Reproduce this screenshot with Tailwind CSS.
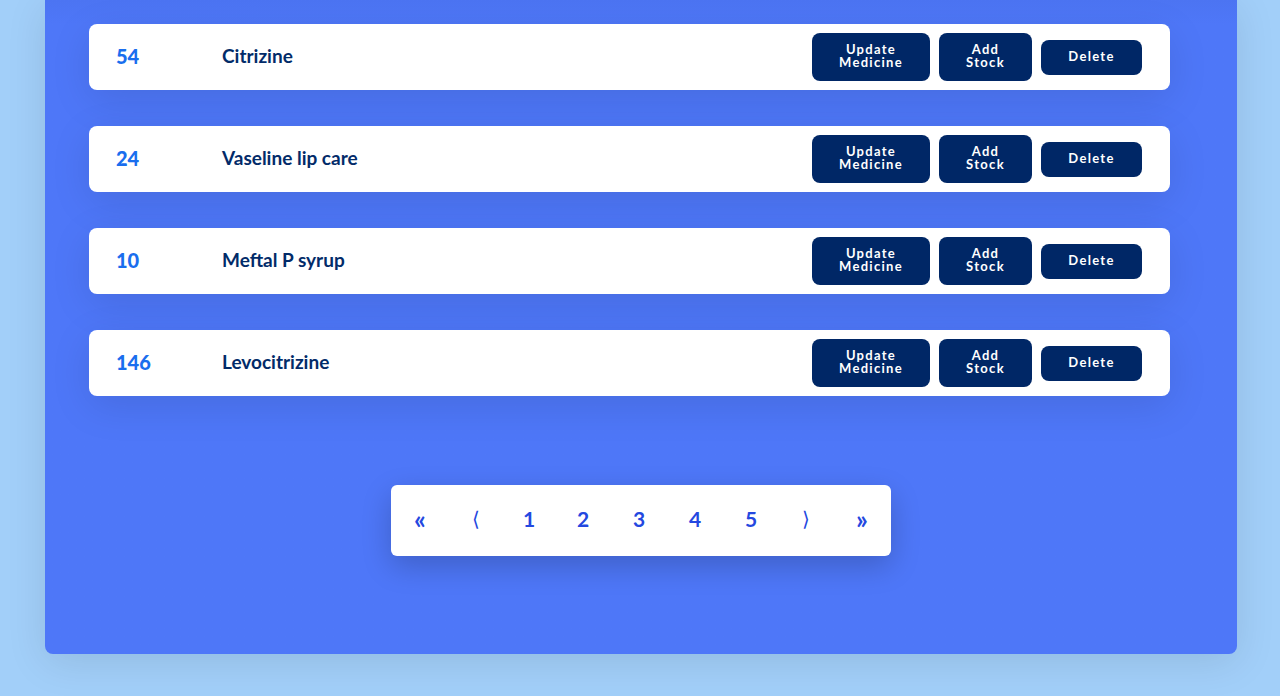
<!DOCTYPE html>
<html lang="en">
<head>
<meta charset="utf-8">
<meta name="viewport" content="width=device-width, initial-scale=1">
<title>Medicines</title>
<script src="https://cdn.jsdelivr.net/npm/@tailwindcss/browser@4"></script>
</head>
<body class="min-h-screen bg-[#a2cff9] pb-[42px] font-[Lato,sans-serif] font-bold">
<main class="ml-[45px] mr-[43px] rounded-b-lg bg-[#4e77f8] bg-linear-to-b from-[#4c74f2] to-[#4e77f8] to-[24px] pt-6 pb-[98px] pl-11 pr-[67px] shadow-[0_8px_40px_rgba(0,0,0,0.1)]">
  <ul class="flex flex-col gap-9">
    <li class="flex h-[66px] items-center rounded-lg bg-white pl-[27px] pr-7 shadow-[0_10px_40px_rgba(0,0,0,0.1)]">
      <span class="w-[106px] pb-0.5 text-xl leading-6 font-black text-[#1a6eee]">54</span>
      <span class="flex-1 pb-0.5 text-[19px] leading-6 text-[#022b69]">Citrizine</span>
      <div class="flex items-center gap-[9px] text-[13px] leading-[13px] tracking-widest text-white">
        <button type="button" class="h-12 w-[118px] rounded-lg bg-[#002766] px-6 pb-0.5">Update Medicine</button>
        <button type="button" class="h-12 w-[93px] rounded-lg bg-[#002766] px-6 pb-0.5">Add Stock</button>
        <button type="button" class="h-[35px] w-[101px] rounded-lg bg-[#002766] pb-0.5">Delete</button>
      </div>
    </li>
    <li class="flex h-[66px] items-center rounded-lg bg-white pl-[27px] pr-7 shadow-[0_10px_40px_rgba(0,0,0,0.1)]">
      <span class="w-[106px] pb-0.5 text-xl leading-6 font-black text-[#1a6eee]">24</span>
      <span class="flex-1 pb-0.5 text-[19px] leading-6 text-[#022b69]">Vaseline lip care</span>
      <div class="flex items-center gap-[9px] text-[13px] leading-[13px] tracking-widest text-white">
        <button type="button" class="h-12 w-[118px] rounded-lg bg-[#002766] px-6 pb-0.5">Update Medicine</button>
        <button type="button" class="h-12 w-[93px] rounded-lg bg-[#002766] px-6 pb-0.5">Add Stock</button>
        <button type="button" class="h-[35px] w-[101px] rounded-lg bg-[#002766] pb-0.5">Delete</button>
      </div>
    </li>
    <li class="flex h-[66px] items-center rounded-lg bg-white pl-[27px] pr-7 shadow-[0_10px_40px_rgba(0,0,0,0.1)]">
      <span class="w-[106px] pb-0.5 text-xl leading-6 font-black text-[#1a6eee]">10</span>
      <span class="flex-1 pb-0.5 text-[19px] leading-6 text-[#022b69]">Meftal P syrup</span>
      <div class="flex items-center gap-[9px] text-[13px] leading-[13px] tracking-widest text-white">
        <button type="button" class="h-12 w-[118px] rounded-lg bg-[#002766] px-6 pb-0.5">Update Medicine</button>
        <button type="button" class="h-12 w-[93px] rounded-lg bg-[#002766] px-6 pb-0.5">Add Stock</button>
        <button type="button" class="h-[35px] w-[101px] rounded-lg bg-[#002766] pb-0.5">Delete</button>
      </div>
    </li>
    <li class="flex h-[66px] items-center rounded-lg bg-white pl-[27px] pr-7 shadow-[0_10px_40px_rgba(0,0,0,0.1)]">
      <span class="w-[106px] pb-0.5 text-xl leading-6 font-black text-[#1a6eee]">146</span>
      <span class="flex-1 pb-0.5 text-[19px] leading-6 text-[#022b69]">Levocitrizine</span>
      <div class="flex items-center gap-[9px] text-[13px] leading-[13px] tracking-widest text-white">
        <button type="button" class="h-12 w-[118px] rounded-lg bg-[#002766] px-6 pb-0.5">Update Medicine</button>
        <button type="button" class="h-12 w-[93px] rounded-lg bg-[#002766] px-6 pb-0.5">Add Stock</button>
        <button type="button" class="h-[35px] w-[101px] rounded-lg bg-[#002766] pb-0.5">Delete</button>
      </div>
    </li>
  </ul>
  <div class="-mr-[23px] mt-[89px] flex justify-center">
    <nav aria-label="Pagination" class="flex h-[71px] items-center gap-11 rounded-md bg-white px-[22px] pb-1 text-[21px] leading-6 text-[#2448e0] shadow-[0_10px_30px_rgba(0,0,0,0.2)]">
      <button type="button" class="flex w-3.5 justify-center text-[26px]">«</button>
      <button type="button" class="flex w-2.5 justify-center font-['DejaVu_Sans',sans-serif] text-xl leading-6 font-extralight">⟨</button>
      <button type="button" class="flex w-2 justify-center">1</button>
      <button type="button" class="flex w-3 justify-center">2</button>
      <button type="button" class="flex w-3 justify-center">3</button>
      <button type="button" class="flex w-3 justify-center">4</button>
      <button type="button" class="flex w-3 justify-center">5</button>
      <button type="button" class="flex w-2.5 justify-center font-['DejaVu_Sans',sans-serif] text-xl leading-6 font-extralight">⟩</button>
      <button type="button" class="flex w-3.5 justify-center text-[26px]">»</button>
    </nav>
  </div>
</main>
</body>
</html>
